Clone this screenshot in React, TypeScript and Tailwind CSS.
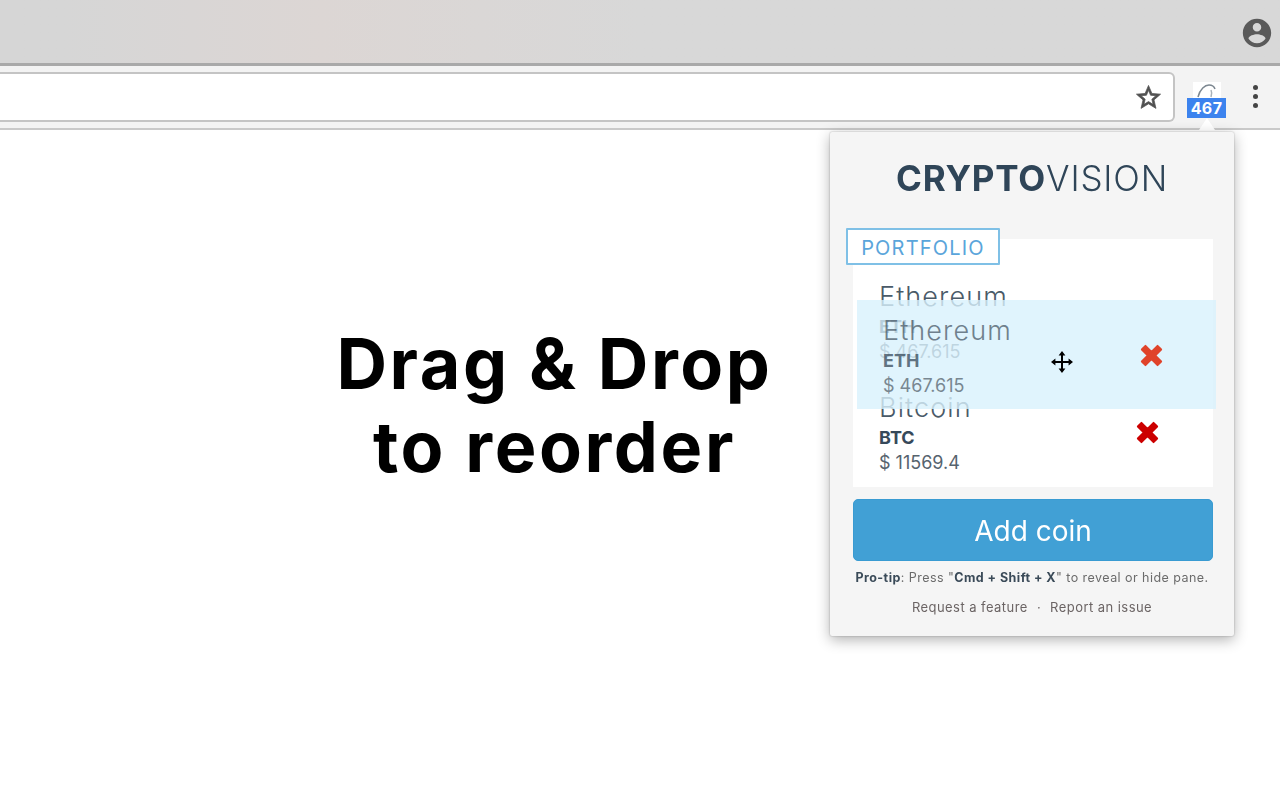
import React from 'react'

interface CoinType {
    name: string;
    code: string;
    price: string;
}

const CrossIcon = ({ color }: { color: string }) => (
    <svg width="29" height="29" viewBox="0 0 24 24">
        <path d="M4 7 L7 4 L12 9 L17 4 L20 7 L15 12 L20 17 L17 20 L12 15 L7 20 L4 17 L9 12 Z" fill={color} stroke={color} strokeWidth="1.6" strokeLinejoin="round" />
    </svg>
)

const MoveCursor = () => (
    <svg width="24" height="24" viewBox="0 0 24 24" fill="#000000" className="absolute left-[193px] top-[50px]">
        <path d="M11 4h2v16h-2zM4 11h16v2H4z" />
        <path d="M12 1l3.4 4.4H8.6zM12 23l-3.4-4.4h6.8zM1 12l4.4-3.4v6.8zM23 12l-4.4 3.4V8.6z" />
    </svg>
)

const CoinRow = ({ coin, crossColor, ghost }: { coin: CoinType, crossColor?: string, ghost?: boolean }) => (
    <div className={`flex h-[111px] items-center justify-between pl-[26px] ${ghost ? 'pr-[50px]' : 'pr-[51px]'}`}>
        <div className={`flex flex-col self-start pt-[15px] text-[#36495a] ${ghost ? 'opacity-75' : ''}`}>
            <div className="text-[27px] leading-[32px] font-light tracking-[1.1px] text-[#4a5a68]">{coin.name}</div>
            <div className="text-[18px] leading-[28px] font-bold">{coin.code}</div>
            <div className="text-[18px] leading-[22px] font-normal text-[#56636e]">{coin.price}</div>
        </div>
        {crossColor && <CrossIcon color={crossColor} />}
    </div>
)

const App: React.FC = () => {
    return (
        <div className="relative h-[800px] w-[1280px] overflow-hidden bg-white font-['Inter',sans-serif]">
            <div className="flex h-[63px] items-center justify-end bg-gradient-to-r from-[#d6d6d6] from-5% via-[#dcd6d4] via-25% to-[#d8d8d8] to-50% pr-[6px] pt-[3px]">
                <svg width="34" height="34" viewBox="0 0 24 24" fill="#5a5a5a">
                    <path d="M12 2C6.48 2 2 6.48 2 12s4.48 10 10 10 10-4.48 10-10S17.52 2 12 2zm0 3c1.66 0 3 1.34 3 3s-1.34 3-3 3-3-1.34-3-3 1.34-3 3-3zm0 14.2c-2.5 0-4.71-1.28-6-3.22.03-1.99 4-3.08 6-3.08 1.99 0 5.97 1.09 6 3.08-1.29 1.94-3.5 3.22-6 3.22z" />
                </svg>
            </div>
            <div className="flex h-[67px] items-start border-t-[3px] border-b-[2px] border-t-[#a9a9a9] border-b-[#c9c9c9] bg-[#f3f3f3] pt-[6px]">
                <div className="flex h-[50px] w-[1175px] items-center justify-end rounded-r-[6px] border-y-[2px] border-r-[2px] border-[#c4c4c4] bg-white pr-[10px]">
                    <svg width="29" height="29" viewBox="0 0 24 24" fill="#505050" stroke="#505050" strokeWidth="0.6">
                        <path d="M22 9.24l-7.19-.62L12 2 9.19 8.63 2 9.24l5.46 4.73L5.82 21 12 17.27 18.18 21l-1.63-7.03L22 9.24zM12 15.4l-3.76 2.27 1-4.28-3.32-2.88 4.38-.38L12 6.1l1.71 4.04 4.38.38-3.32 2.88 1 4.28L12 15.4z" />
                    </svg>
                </div>
                <div className="relative ml-[12px] mt-[10px] flex h-[28px] w-[39px] flex-col items-center">
                    <div className="h-[18px] w-[28px] bg-white" />
                    <svg width="22" height="15" viewBox="0 0 22 15" fill="none" className="absolute left-[9px] top-[1px]">
                        <path d="M2 14 C4 6 9 2 13 2 C16 2 18 3 19 6" stroke="#7c8790" strokeWidth="1.5" />
                        <path d="M15 7 C16 9 16 11 15 14" stroke="#a9b2b9" strokeWidth="1.5" />
                    </svg>
                    <div className="absolute top-[16px] flex h-[20px] w-[39px] items-center justify-center bg-[#3c83ee] text-[16px] leading-none font-bold tracking-[0.4px] text-white">467</div>
                    <div className="absolute top-[36px] h-0 w-0 border-x-[8px] border-b-[12px] border-x-transparent border-b-white" />
                </div>
                <div className="ml-[27px] mt-[13px] flex flex-col gap-[4px]">
                    <div className="h-[5px] w-[5px] rounded-full bg-[#444444]" />
                    <div className="h-[5px] w-[5px] rounded-full bg-[#444444]" />
                    <div className="h-[5px] w-[5px] rounded-full bg-[#444444]" />
                </div>
            </div>

            <div className="flex w-[1109px] justify-center pt-[192px] text-center">
                <h1 className="text-[70px] leading-[83px] font-bold tracking-[2.6px] text-black">Drag &amp; Drop<br />to reorder</h1>
            </div>

            <div className="absolute left-[830px] top-[132px] flex h-[504px] w-[404px] flex-col rounded-[2px] bg-[#f5f5f5] shadow-[0_4px_14px_rgba(0,0,0,0.3),0_0_2px_rgba(0,0,0,0.3)] blur-[0.6px]">
                <div className="mt-[25px] text-center text-[35px] leading-[42px] tracking-[0.8px] text-[#2f4558]">
                    <span className="font-bold">CRYPTO</span><span className="font-light">VISION</span>
                </div>
                <div className="relative ml-[23px] mr-[21px] mt-[40px] h-[248px] bg-white">
                    <div className="absolute left-[-7px] top-[-11px] flex h-[37px] w-[154px] items-center justify-center rounded-[1px] border-[2px] border-[#7fc0e6] bg-white pt-[3px] text-[20px] tracking-[1.2px] text-[#5aa5db]">PORTFOLIO</div>
                    <div className="pt-[27px]">
                        <CoinRow coin={{ name: 'Ethereum', code: 'ETH', price: '$ 467.615' }} />
                        <CoinRow coin={{ name: 'Bitcoin', code: 'BTC', price: '$ 11569.4' }} crossColor="#cc0000" />
                    </div>
                    <div className="absolute left-[4px] top-[61px] h-[109px] w-[359px] overflow-hidden bg-[#d8f1fc]/80">
                        <CoinRow coin={{ name: 'Ethereum', code: 'ETH', price: '$ 467.615' }} crossColor="#e0432a" ghost />
                        <MoveCursor />
                    </div>
                </div>
                <div className="ml-[23px] mr-[21px] mt-[12px] flex h-[62px] items-center justify-center rounded-[5px] border border-[#399bd2] bg-[#41a0d5] pt-[2px] text-[28px] font-normal text-white">Add coin</div>
                <div className="mt-[9px] text-center text-[12.5px] leading-[16px] tracking-[0.45px] text-[#6b6b6b]">
                    <span className="font-bold text-[#3a4a58]">Pro-tip</span>: Press "<span className="font-bold text-[#3a4a58]">Cmd + Shift + X</span>" to reveal or hide pane.
                </div>
                <div className="mt-[13px] flex justify-center gap-[9px] text-[13px] leading-[16px] tracking-[0.45px] text-[#6b6464]">
                    <span>Request a feature</span><span>·</span><span>Report an issue</span>
                </div>
            </div>
        </div>
    )
}

export default App
